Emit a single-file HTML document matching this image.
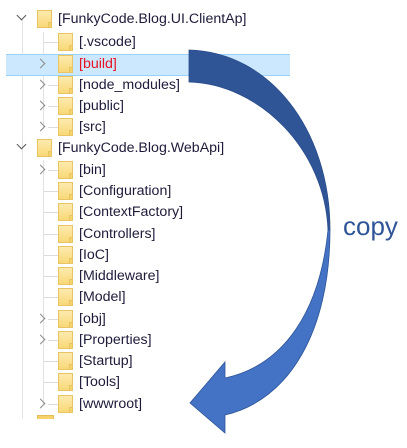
<!DOCTYPE html>
<html><head><meta charset="utf-8"><style>
html,body{margin:0;padding:0;background:#fff;width:407px;height:448px;overflow:hidden;position:relative;font-family:"Liberation Sans",sans-serif}
.r{position:absolute;left:0;height:21px;width:290px}
.t{position:absolute;top:0px;font-size:14.2px;line-height:20px;color:#1e1b3a;white-space:nowrap}
.f{position:absolute;top:1px;width:15px;height:18px;background:linear-gradient(#fdeaae,#f8d877);border:1px solid #e8c463;box-sizing:border-box}
.f:after{content:"";position:absolute;right:-1px;bottom:-1px;width:4px;height:6px;background:#f5d46c;border:1px solid #e8c463;box-sizing:border-box}
.h{position:absolute;top:10px;height:1px;background:#dcdcdc}
.c{position:absolute;top:6px;width:6px;height:6px;border-right:1.5px solid #8a8a8a;border-bottom:1.5px solid #8a8a8a;transform:rotate(-45deg)}
.d{position:absolute;top:3px;width:6px;height:6px;border-right:1.5px solid #555;border-bottom:1.5px solid #555;transform:rotate(45deg)}
</style></head><body>
<div style="position:absolute;left:22px;top:20px;width:1px;height:398px;background:#e2e2e2"></div>
<div style="position:absolute;left:43px;top:32px;width:1px;height:97px;background:#e2e2e2"></div>
<div style="position:absolute;left:43px;top:160px;width:1px;height:244px;background:#e2e2e2"></div>
<div style="position:absolute;left:6px;top:54px;width:284px;height:20px;background:#cce8ff;border-top:1px solid #99d1ff;border-bottom:1px solid #99d1ff"></div>
<div style="position:absolute;left:37px;top:415px;width:15px;height:3px;background:#f6d26a;border:1px solid #e4bd55;border-bottom:none"></div>

<div class="r" style="top:9px"><div class="d" style="left:18px"></div><div class="f" style="left:37px"></div><div class="t" style="left:58px">[FunkyCode.Blog.UI.ClientAp]</div></div>
<div class="r" style="top:32px"><div class="h" style="left:44px;width:14px"></div><div class="f" style="left:58px"></div><div class="t" style="left:79px">[.vscode]</div></div>
<div class="r" style="top:54px"><div class="c" style="left:37px"></div><div class="f" style="left:58px"></div><div class="t" style="left:79px;color:#e81123">[build]</div></div>
<div class="r" style="top:75px"><div class="c" style="left:37px"></div><div class="h" style="left:48px;width:10px"></div><div class="f" style="left:58px"></div><div class="t" style="left:79px">[node_modules]</div></div>
<div class="r" style="top:96px"><div class="c" style="left:37px"></div><div class="h" style="left:48px;width:10px"></div><div class="f" style="left:58px"></div><div class="t" style="left:79px">[public]</div></div>
<div class="r" style="top:117px"><div class="c" style="left:37px"></div><div class="h" style="left:48px;width:10px"></div><div class="f" style="left:58px"></div><div class="t" style="left:79px">[src]</div></div>
<div class="r" style="top:138px"><div class="d" style="left:18px"></div><div class="f" style="left:37px"></div><div class="t" style="left:58px">[FunkyCode.Blog.WebApi]</div></div>
<div class="r" style="top:160px"><div class="c" style="left:37px"></div><div class="h" style="left:48px;width:10px"></div><div class="f" style="left:58px"></div><div class="t" style="left:79px">[bin]</div></div>
<div class="r" style="top:181px"><div class="h" style="left:44px;width:14px"></div><div class="f" style="left:58px"></div><div class="t" style="left:79px">[Configuration]</div></div>
<div class="r" style="top:202px"><div class="h" style="left:44px;width:14px"></div><div class="f" style="left:58px"></div><div class="t" style="left:79px">[ContextFactory]</div></div>
<div class="r" style="top:224px"><div class="h" style="left:44px;width:14px"></div><div class="f" style="left:58px"></div><div class="t" style="left:79px">[Controllers]</div></div>
<div class="r" style="top:245px"><div class="h" style="left:44px;width:14px"></div><div class="f" style="left:58px"></div><div class="t" style="left:79px">[IoC]</div></div>
<div class="r" style="top:266px"><div class="h" style="left:44px;width:14px"></div><div class="f" style="left:58px"></div><div class="t" style="left:79px">[Middleware]</div></div>
<div class="r" style="top:287px"><div class="h" style="left:44px;width:14px"></div><div class="f" style="left:58px"></div><div class="t" style="left:79px">[Model]</div></div>
<div class="r" style="top:309px"><div class="c" style="left:37px"></div><div class="h" style="left:48px;width:10px"></div><div class="f" style="left:58px"></div><div class="t" style="left:79px">[obj]</div></div>
<div class="r" style="top:330px"><div class="c" style="left:37px"></div><div class="h" style="left:48px;width:10px"></div><div class="f" style="left:58px"></div><div class="t" style="left:79px">[Properties]</div></div>
<div class="r" style="top:351px"><div class="h" style="left:44px;width:14px"></div><div class="f" style="left:58px"></div><div class="t" style="left:79px">[Startup]</div></div>
<div class="r" style="top:372px"><div class="h" style="left:44px;width:14px"></div><div class="f" style="left:58px"></div><div class="t" style="left:79px">[Tools]</div></div>
<div class="r" style="top:394px"><div class="c" style="left:37px"></div><div class="h" style="left:48px;width:10px"></div><div class="f" style="left:58px"></div><div class="t" style="left:79px">[wwwroot]</div></div>

<svg width="407" height="448" style="position:absolute;left:0;top:0">
<path d="M189,50 C270,52 330,130 330,230 L328,230 C325,150 260,84 189,82 Z" fill="#2f5597" stroke="#2a4d8a" stroke-width="0.8"/>
<path d="M330,230 C330,330 290,400 225,415 L225,433 L190,403 L225,362 L225,378 C285,365 320,310 328,230 Z" fill="#4472c4" stroke="#2f5597" stroke-width="0.8"/>
</svg>
<div style="position:absolute;left:343px;top:211px;font-size:26px;color:#2f5597;line-height:30px">copy</div>
</body></html>
